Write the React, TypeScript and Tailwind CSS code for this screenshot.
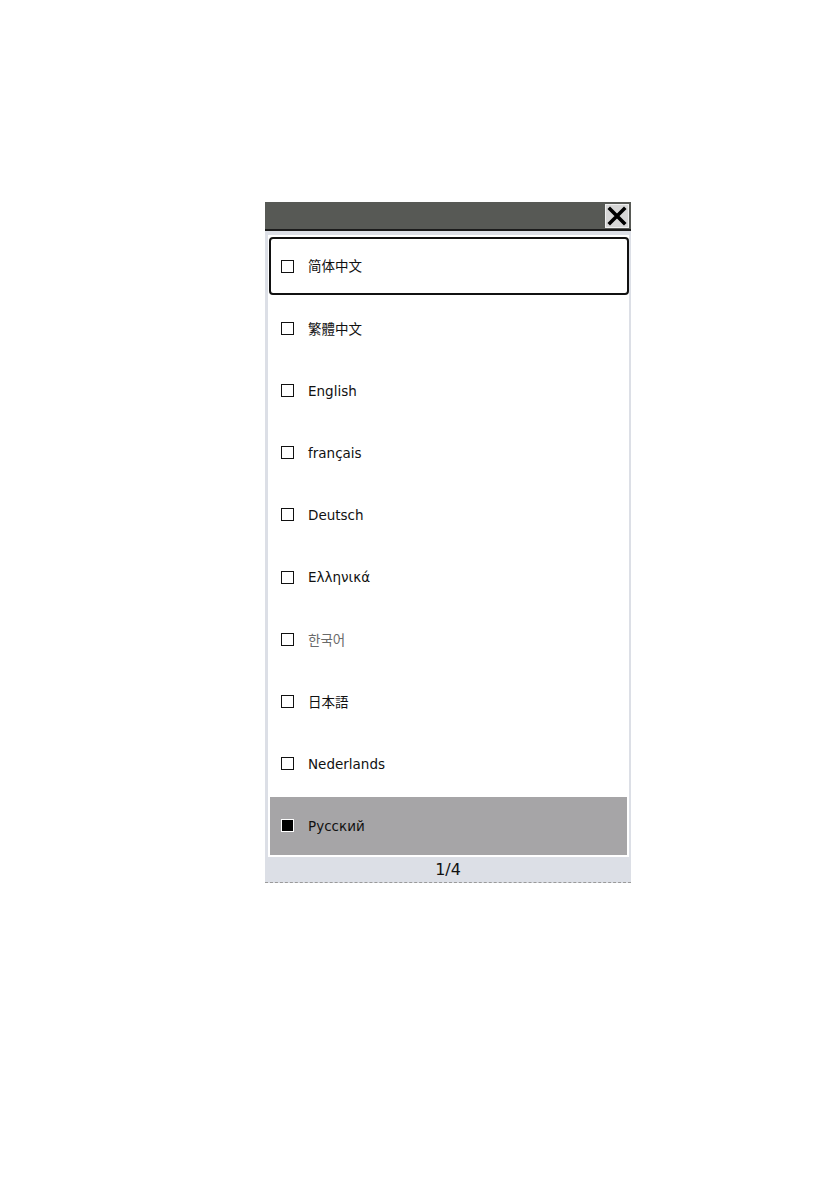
import React from "react";

const items = [
  { label: "简体中文", font: "font-['DejaVu_Sans','Noto_Sans_CJK_SC',sans-serif]" },
  { label: "繁體中文", font: "font-['DejaVu_Sans','Noto_Sans_CJK_TC',sans-serif]" },
  { label: "English", font: "font-['DejaVu_Sans',sans-serif]" },
  { label: "français", font: "font-['DejaVu_Sans',sans-serif]" },
  { label: "Deutsch", font: "font-['DejaVu_Sans',sans-serif]" },
  { label: "Ελληνικά", font: "font-['DejaVu_Sans',sans-serif]" },
  { label: "한국어", font: "font-['Noto_Sans_CJK_KR',sans-serif]" },
  { label: "日本語", font: "font-['DejaVu_Sans','Noto_Sans_CJK_JP',sans-serif]" },
  { label: "Nederlands", font: "font-['DejaVu_Sans',sans-serif]" },
  { label: "Русский", font: "font-['DejaVu_Sans',sans-serif]" },
];

export default function App() {
  return (
    <div className="w-[838px] h-[1190px] bg-white pl-[265px] pt-[202px] font-['DejaVu_Sans',sans-serif]">
      <div className="w-[366px] flex flex-col">
        <div className="h-[27px] bg-[#575955] flex items-center justify-end pr-[2px]">
          <div className="w-[24px] h-[24px] bg-[#d6d6d6] border border-[#efefef] flex items-center justify-center mt-[1px]">
            <svg width="20" height="20" viewBox="0 0 20 20">
              <path d="M3 3 L17 17 M17 3 L3 17" stroke="#000" strokeWidth="3.6" strokeLinecap="square" />
            </svg>
          </div>
        </div>
        <div className="h-[2px] bg-[#1a1a1a]" />
        <div className="bg-[#dcdfe6] pt-[4px] pl-[3px] pr-[2px]">
          <div className="bg-white px-[2px] flex flex-col">
            {items.map((it, i) => {
              const focused = i === 0;
              const selected = i === 9;
              return (
                <div key={i} className="h-[62.2px] py-[2px]">
                  <div
                    className={
                      "flex items-center h-full " +
                      (focused
                        ? "border-2 border-[#111] rounded-[4px] pl-[10px] -ml-[1px] -mr-[2px] h-[60px] "
                        : "pl-[11px] ") +
                      (selected ? "bg-[#a6a5a7] " : "")
                    }
                  >
                    {selected ? (
                      <div className="w-[13px] h-[13px] bg-black border border-white" />
                    ) : (
                      <div className="w-[13px] h-[13px] border border-[#111] bg-white" />
                    )}
                    <span
                      className={
                        "ml-[14px] text-[13.5px] leading-none pt-[2px] " +
                        it.font +
                        (i === 6 ? " text-[#6a6a6a]" : " text-[#111]")
                      }
                    >
                      {it.label}
                    </span>
                  </div>
                </div>
              );
            })}
          </div>
        </div>
        <div className="h-[26px] bg-[#dcdfe6] flex items-center justify-center border-b border-dashed border-[#9a9a9a]">
          <span className="text-[16px] text-[#111] leading-none pt-[2px] font-['DejaVu_Sans',sans-serif]">1/4</span>
        </div>
      </div>
    </div>
  );
}
